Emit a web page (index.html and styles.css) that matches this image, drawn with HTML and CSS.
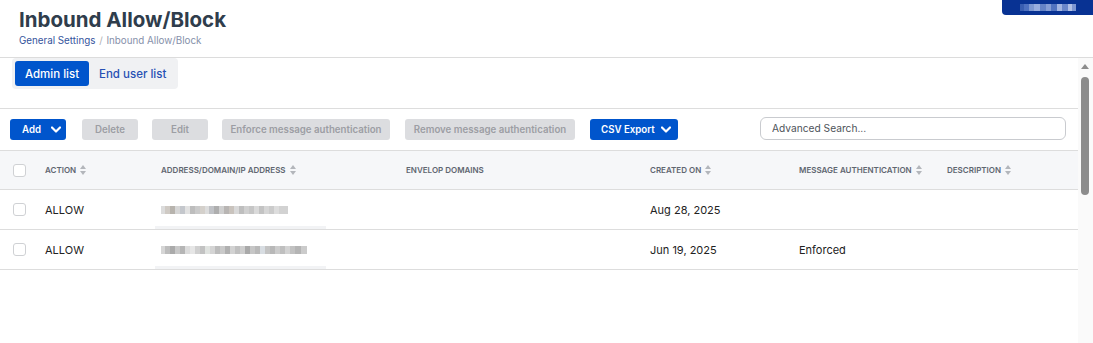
FILE: index.html
```html
<!DOCTYPE html>
<html lang="en">
<head>
    <meta charset="UTF-8">
    <title>Inbound Allow/Block</title>
    <link rel="stylesheet" href="styles.css">
</head>
<body>
    <div class="page-header">
        <div class="title-block">
            <h1>Inbound Allow/Block</h1>
            <div class="breadcrumb">
                <a href="#">General Settings</a>
                <span class="sep">/</span>
                <span class="current">Inbound Allow/Block</span>
            </div>
        </div>
        <div class="user-badge"><span class="mosaic badge-mosaic"></span></div>
    </div>

    <div class="main">
        <div class="content">
            <div class="tabs-area">
                <div class="tabs">
                    <button class="tab active">Admin list</button>
                    <button class="tab">End user list</button>
                </div>
            </div>

            <div class="toolbar">
                <button class="btn primary btn-add">Add
                    <svg class="chev" viewBox="0 0 10 6"><path d="M1 1l4 4 4-4" /></svg>
                </button>
                <button class="btn disabled btn-small">Delete</button>
                <button class="btn disabled btn-small">Edit</button>
                <button class="btn disabled btn-enforce">Enforce message authentication</button>
                <button class="btn disabled btn-remove">Remove message authentication</button>
                <button class="btn primary btn-csv">CSV Export
                    <svg class="chev" viewBox="0 0 10 6"><path d="M1 1l4 4 4-4" /></svg>
                </button>
                <input class="search" type="text" placeholder="Advanced Search...">
            </div>

            <div class="table">
                <div class="row head">
                    <div class="cell"><span class="checkbox"></span></div>
                    <div class="cell">Action <span class="sort"></span></div>
                    <div class="cell">Address/Domain/IP Address <span class="sort"></span></div>
                    <div class="cell">Envelop Domains</div>
                    <div class="cell">Created On <span class="sort"></span></div>
                    <div class="cell">Message Authentication <span class="sort"></span></div>
                    <div class="cell">Description <span class="sort"></span></div>
                </div>
                <div class="row">
                    <div class="cell"><span class="checkbox"></span></div>
                    <div class="cell">ALLOW</div>
                    <div class="cell addr"><span class="mosaic addr-1"></span></div>
                    <div class="cell"></div>
                    <div class="cell">Aug 28, 2025</div>
                    <div class="cell"></div>
                    <div class="cell"></div>
                </div>
                <div class="row">
                    <div class="cell"><span class="checkbox"></span></div>
                    <div class="cell">ALLOW</div>
                    <div class="cell addr"><span class="mosaic addr-2"></span></div>
                    <div class="cell"></div>
                    <div class="cell">Jun 19, 2025</div>
                    <div class="cell">Enforced</div>
                    <div class="cell"></div>
                </div>
            </div>
        </div>

        <div class="scrollbar">
            <span class="scroll-up"></span>
            <span class="scroll-thumb"></span>
        </div>
    </div>
</body>
</html>
```

FILE: styles.css
```css
body {
    margin: 0;
    font-family: 'Inter', 'Noto Sans', sans-serif;
    background: #fff;
    color: #222;
    height: 343px;
    overflow: hidden;
}

/* header */
.page-header {
    display: flex;
    justify-content: space-between;
    height: 57px;
    border-bottom: 1px solid #dcdcdc;
    box-sizing: content-box;
}
.title-block {
    padding: 7px 0 0 19px;
}
h1 {
    margin: 0;
    font-size: 20.5px;
    font-weight: 700;
    line-height: 26px;
    color: #2f3d4c;
}
.breadcrumb {
    font-size: 9.8px;
    line-height: 14px;
    margin-top: 1px;
}
.breadcrumb a {
    color: #34539c;
    text-decoration: none;
}
.breadcrumb .sep {
    color: #b0b0b0;
    margin: 0 1px;
}
.breadcrumb .current {
    color: #8690aa;
}
.user-badge {
    width: 91px;
    height: 15px;
    background: #083293;
    border-bottom-left-radius: 4px;
    display: flex;
    align-items: center;
    padding-left: 18px;
    box-sizing: border-box;
}

/* blurred pixel blocks */
.mosaic {
    display: inline-block;
    height: 8px;
}
.badge-mosaic {
    width: 56px;
    height: 7px;
    background: linear-gradient(90deg, #3e62b4 0 4px, #5577c4 4px 9px, #8aa3d8 9px 14px, #a8bbe6 14px 20px, #6f8ccc 20px 26px, #93a9dc 26px 31px, #5a7bc5 31px 37px, #b4c4ea 37px 42px, #7691d0 42px 48px, #c3d0ef 48px 52px, #8ba2d8 52px 56px);
    opacity: 0.9;
}
.addr {
    position: relative;
}
.addr::after {
    content: "";
    position: absolute;
    left: -6px;
    bottom: 0;
    width: 171px;
    height: 3px;
    background: #f2f3f5;
}
.addr-1 {
    width: 127px;
    background: linear-gradient(90deg, #dcdcdc 0 4px, #cfcac4 4px 9px, #b7b3ad 9px 14px, #d6d6d6 14px 19px, #c4c7cc 19px 24px, #e2e2e2 24px 29px, #bdbdbd 29px 34px, #cacaca 34px 39px, #d4d0cb 39px 44px, #dddddd 44px 48px, #c0c2c6 48px 53px, #aeaeae 53px 58px, #cfcfcf 58px 63px, #b8b5b3 63px 68px, #c9c3bd 68px 73px, #d9d9d9 73px 78px, #bebebe 78px 83px, #d0d0d0 83px 88px, #c6c6c6 88px 93px, #dadada 93px 98px, #c3c3c3 98px 103px, #d6d6d6 103px 108px, #cbcbcb 108px 113px, #dddddd 113px 118px, #d2d2d2 118px 127px);
}
.addr-2 {
    width: 146px;
    background: linear-gradient(90deg, #d6d6d6 0 4px, #bdbdbd 4px 9px, #aaaaaa 9px 14px, #c8c8c8 14px 19px, #b5b5b5 19px 24px, #dcdcdc 24px 29px, #e6e6e6 29px 34px, #d0d0d0 34px 39px, #c2c2c2 39px 44px, #e0e3e0 44px 49px, #d4d4d4 49px 54px, #bcbcbc 54px 59px, #c9c9c9 59px 64px, #b0b0b0 64px 69px, #d2d2d2 69px 74px, #c0c0c0 74px 79px, #cdcdcd 79px 84px, #a9a9a9 84px 89px, #c6c6c6 89px 94px, #b9b9b9 94px 99px, #d8dde2 99px 104px, #c4c4c4 104px 109px, #b8b8b8 109px 114px, #cccccc 114px 119px, #bfbfbf 119px 124px, #d3d3d3 124px 129px, #c1c1c1 129px 134px, #b4b4b4 134px 140px, #cbcbcb 140px 146px);
}

/* main area */
.main {
    display: flex;
}
.content {
    flex: 1;
}
.scrollbar {
    width: 15px;
    height: 285px;
    background: #fafafa;
    position: relative;
}
.scroll-up {
    position: absolute;
    top: 6px;
    left: 3px;
    width: 0;
    height: 0;
    border-left: 4px solid transparent;
    border-right: 4px solid transparent;
    border-bottom: 5px solid #8d8d8d;
}
.scroll-thumb {
    position: absolute;
    top: 19px;
    left: 3px;
    width: 8px;
    height: 118px;
    border-radius: 4px;
    background: #8c8c8c;
}

/* tabs */
.tabs-area {
    height: 50px;
    border-bottom: 1px solid #dddddd;
    padding-left: 12px;
}
.tabs {
    display: inline-flex;
    background: #f0f1f3;
    padding: 3px;
    border-radius: 4px;
    width: 166px;
    height: 31px;
    box-sizing: border-box;
}
.tab {
    font-family: inherit;
    font-size: 11.5px;
    font-weight: 500;
    white-space: nowrap;
    border: none;
    background: none;
    color: #2750b4;
    padding: 0 0 0 10px;
    height: 25px;
    border-radius: 3px;
}
.tab.active {
    width: 74px;
    padding: 0;
    background: #0055cc;
    color: #fff;
}

/* toolbar */
.toolbar {
    display: flex;
    align-items: center;
    height: 41px;
    padding: 0 12px 0 10px;
    border-bottom: 1px solid #dddddd;
}
.btn {
    font-family: inherit;
    font-size: 9.7px;
    font-weight: 600;
    white-space: nowrap;
    height: 21px;
    padding: 0;
    border: none;
    border-radius: 3px;
    margin-right: 14px;
    display: inline-flex;
    align-items: center;
    justify-content: center;
}
.btn.primary {
    background: #0055cc;
    color: #fff;
}
.btn.disabled {
    background: #dcdde0;
    color: #9c9ea4;
}
.btn-add {
    width: 56px;
    margin-right: 16px;
    justify-content: space-between;
    padding: 0 5px 0 12px;
}
.btn-small {
    width: 56px;
}
.btn-enforce {
    width: 168px;
    margin-right: 15px;
}
.btn-remove {
    width: 170px;
    margin-right: 15px;
}
.btn-csv {
    width: 88px;
    padding: 0 7px 0 11px;
    justify-content: space-between;
}
.chev {
    width: 10px;
    height: 7px;
    fill: none;
    stroke: #fff;
    stroke-width: 2.2;
    stroke-linecap: round;
    stroke-linejoin: round;
}
.search {
    margin-left: auto;
    width: 306px;
    height: 23px;
    box-sizing: border-box;
    border: 1px solid #c9cbcf;
    border-radius: 6px;
    padding: 0 11px;
    font-family: inherit;
    font-size: 10.2px;
    color: #333;
    margin-top: -3px;
}
.search::placeholder {
    color: #4d5259;
}

/* table */
.row {
    display: grid;
    grid-template-columns: 45px 116px 245px 244px 149px 148px 1fr;
    height: 40px;
    border-bottom: 1px solid #dddddd;
    box-sizing: border-box;
    font-size: 11px;
    font-weight: 400;
    color: #222;
}
.row.head {
    height: 39px;
    background: #f6f7f9;
    font-size: 8px;
    font-weight: 600;
    text-transform: uppercase;
    color: #5f6670;
}
.cell {
    display: flex;
    align-items: center;
}
.cell:first-child {
    padding-left: 13px;
}
.checkbox {
    width: 13px;
    height: 13px;
    box-sizing: border-box;
    border: 1px solid #cfd1d4;
    border-radius: 3px;
    background: #fff;
}
.sort {
    display: inline-block;
    position: relative;
    width: 6px;
    height: 10px;
    margin-left: 4px;
}
.sort::before,
.sort::after {
    content: "";
    position: absolute;
    left: 0;
    border-left: 3px solid transparent;
    border-right: 3px solid transparent;
}
.sort::before {
    top: 0;
    border-bottom: 4px solid #b3b6bb;
}
.sort::after {
    bottom: 0;
    border-top: 4px solid #b3b6bb;
}
```
